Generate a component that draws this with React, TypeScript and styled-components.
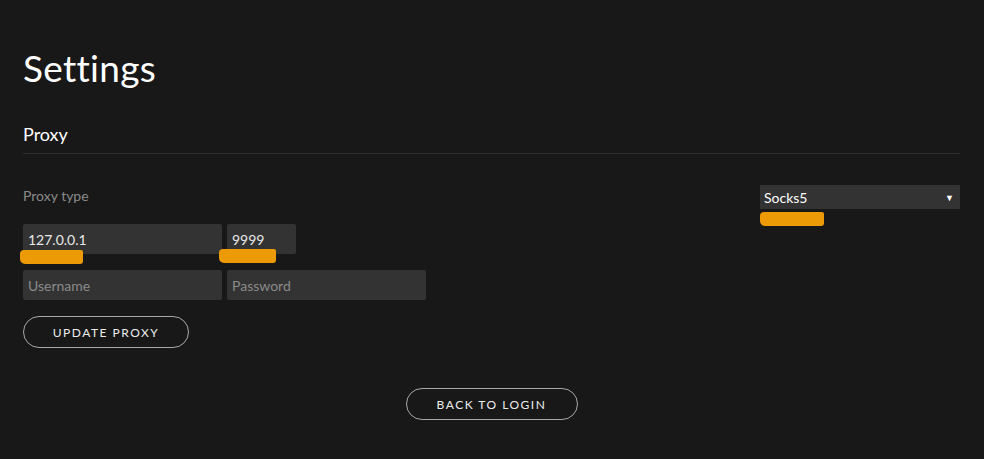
import styled, { createGlobalStyle } from "styled-components";

const GlobalStyle = createGlobalStyle`
  html, body {
    margin: 0;
    padding: 0;
    background: #181818;
  }
  body {
    font-family: "Lato", "Liberation Sans", sans-serif;
    color: #fff;
  }
`;

const Page = styled.div`
  min-height: 459px;
  padding: 46px 24px 0 23px;
  box-sizing: border-box;
`;

const Title = styled.h1`
  margin: 0;
  font-size: 37px;
  font-weight: 400;
  line-height: 44px;
  letter-spacing: 0.3px;
`;

const SectionHeader = styled.h2`
  margin: 33px 0 0;
  padding-bottom: 8px;
  font-size: 18px;
  font-weight: 400;
  line-height: 22px;
  border-bottom: 1px solid #2e2e2e;
`;

const TypeRow = styled.div`
  display: flex;
  justify-content: space-between;
  align-items: flex-start;
  margin-top: 31px;
`;

const Label = styled.span`
  font-size: 14px;
  color: #8a8a8a;
  line-height: 18px;
  margin-top: 2px;
`;

const SelectWrap = styled.div`
  position: relative;
  width: 200px;
`;

const SelectBox = styled.div`
  display: flex;
  align-items: center;
  justify-content: space-between;
  height: 24px;
  padding: 0 6px 0 4px;
  background: #333;
  font-size: 14px;
  color: #fff;
`;

const Arrow = styled.span`
  font-size: 9px;
  color: #fff;
`;

const Fields = styled.div`
  display: flex;
  flex-direction: column;
  gap: 16px;
  margin-top: 15px;
`;

const Row = styled.div`
  display: flex;
  gap: 5px;
`;

const Field = styled.div<{ $w: number }>`
  position: relative;
  width: ${(p) => p.$w}px;
`;

const Input = styled.input`
  display: block;
  width: 100%;
  height: 30px;
  box-sizing: border-box;
  border: none;
  border-radius: 2px;
  background: #333;
  padding: 0 5px;
  font-family: "Lato", "Liberation Sans", sans-serif;
  font-size: 14px;
  color: #e8e8e8;
  outline: none;
  &::placeholder {
    color: #8a8a8a;
  }
`;

const Mark = styled.div<{ $l: number; $t: number; $w: number }>`
  position: absolute;
  left: ${(p) => p.$l}px;
  top: ${(p) => p.$t}px;
  width: ${(p) => p.$w}px;
  height: 14px;
  background: #ec9a05;
  border-radius: 4px 2px 3px 5px;
`;

const PillButton = styled.button<{ $w: number }>`
  width: ${(p) => p.$w}px;
  height: 32px;
  padding: 0;
  border: 1px solid #a8a8a8;
  border-radius: 16px;
  background: transparent;
  color: #ececec;
  font-family: "Lato", "Liberation Sans", sans-serif;
  font-size: 12px;
  letter-spacing: 1.5px;
  text-transform: uppercase;
  white-space: nowrap;
  cursor: pointer;
`;

const UpdateRow = styled.div`
  margin-top: 16px;
`;

const BackRow = styled.div`
  display: flex;
  justify-content: center;
  margin-top: 40px;
`;

export default function App() {
  return (
    <>
      <GlobalStyle />
      <Page>
        <Title>Settings</Title>
        <SectionHeader>Proxy</SectionHeader>
        <TypeRow>
          <Label>Proxy type</Label>
          <SelectWrap>
            <SelectBox>
              <span>Socks5</span>
              <Arrow>▼</Arrow>
            </SelectBox>
            <Mark $l={0} $t={27} $w={64} />
          </SelectWrap>
        </TypeRow>
        <Fields>
          <Row>
            <Field $w={199}>
              <Input defaultValue="127.0.0.1" />
              <Mark $l={-3} $t={26} $w={63} />
            </Field>
            <Field $w={69}>
              <Input defaultValue="9999" />
              <Mark $l={-8} $t={25} $w={57} />
            </Field>
          </Row>
          <Row>
            <Field $w={199}>
              <Input placeholder="Username" />
            </Field>
            <Field $w={199}>
              <Input placeholder="Password" type="password" />
            </Field>
          </Row>
        </Fields>
        <UpdateRow>
          <PillButton $w={166}>Update proxy</PillButton>
        </UpdateRow>
        <BackRow>
          <PillButton $w={172}>Back to login</PillButton>
        </BackRow>
      </Page>
    </>
  );
}
